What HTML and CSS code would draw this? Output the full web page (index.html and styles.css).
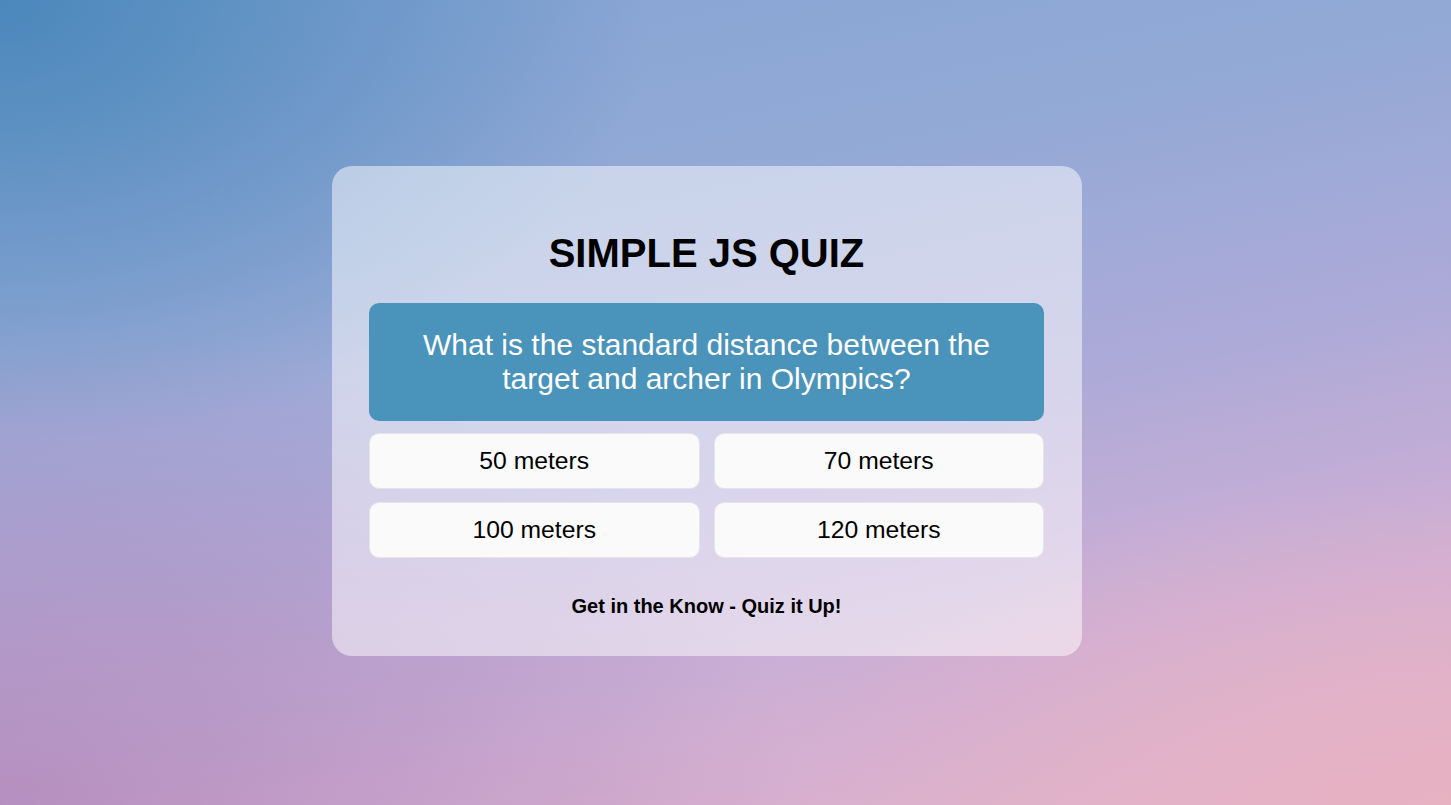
FILE: index.html
```html
<!DOCTYPE html>
<html lang="en">
<head>
<meta charset="utf-8">
<title>Simple JS Quiz</title>
<link rel="stylesheet" href="styles.css">
</head>
<body>
  <main class="quiz">
    <h1 class="quiz-title">SIMPLE JS QUIZ</h1>
    <div class="question">What is the standard distance between the target and archer in Olympics?</div>
    <div class="answers">
      <button class="answer">50 meters</button>
      <button class="answer">70 meters</button>
      <button class="answer">100 meters</button>
      <button class="answer">120 meters</button>
    </div>
    <p class="tagline">Get in the Know - Quiz it Up!</p>
  </main>
</body>
</html>
```

FILE: styles.css
```css
* { box-sizing: border-box; }

html, body { height: 100%; }

body {
  margin: 0;
  min-height: 100vh;
  display: flex;
  align-items: center;
  padding: 17px 0 0 332px;
  font-family: "Liberation Sans", Arial, sans-serif;
  background:
    radial-gradient(ellipse 55% 60% at 0% 100%, rgba(176, 134, 184, 0.75), rgba(176, 134, 184, 0) 100%),
    radial-gradient(ellipse 45% 55% at 0% 0%, rgba(72, 134, 186, 0.95), rgba(72, 134, 186, 0) 100%),
    radial-gradient(ellipse 45% 40% at 100% 100%, rgba(232, 178, 194, 0.9), rgba(232, 178, 194, 0) 100%),
    linear-gradient(168deg, #84a4d3 0%, #93a9d6 30%, #aeaad8 55%, #d0afd4 78%, #e2b2c8 100%);
}

.quiz {
  width: 750px;
  padding: 63px 38px 38px 37px;
  border-radius: 20px;
  background: rgba(255, 255, 255, 0.5);
  display: flex;
  flex-direction: column;
}

.quiz-title {
  margin: 2px 0 27px;
  font-size: 40px;
  font-weight: bold;
  text-align: center;
  color: #000;
}

.question {
  background: #4a93bb;
  color: #fff;
  font-size: 30px;
  text-align: center;
  padding: 25px 20px;
  border-radius: 10px;
}

.answers {
  margin-top: 12px;
  display: grid;
  grid-template-columns: 1fr 1fr;
  gap: 13px 14px;
}

.answer {
  font-family: "Liberation Sans", Arial, sans-serif;
  font-size: 24.7px;
  color: #000;
  background: #fafafa;
  border: 1px solid #e4e4ea;
  border-radius: 10px;
  padding: 13px 10px;
  line-height: normal;
  cursor: pointer;
}

.tagline {
  margin: 37px 0 0;
  text-align: center;
  font-size: 20px;
  font-weight: bold;
  color: #000;
}
```
